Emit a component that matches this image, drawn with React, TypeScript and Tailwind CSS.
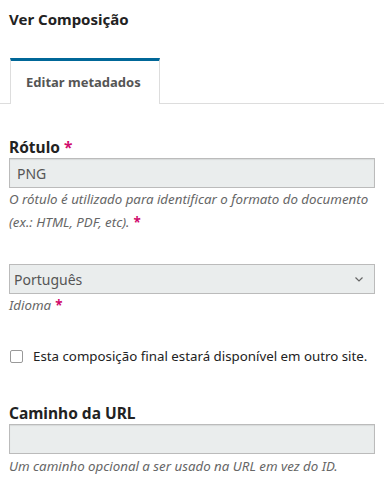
import React from 'react';

const font = { fontFamily: '"Noto Sans", "Open Sans", sans-serif' };

function Req() {
  return <span className="ml-[4px] text-[#d00a6c] font-bold not-italic">*</span>;
}

export default function App() {
  return (
    <div className="w-[384px] h-[500px] bg-white text-[#222] overflow-hidden" style={font}>
      <h1 className="px-[9px] pt-[8px] text-[15px] leading-[22px] font-bold">Ver Composição</h1>

      {/* abas */}
      <div className="mt-[28px] flex border-b border-[#ddd]">
        <div className="w-[10px]" />
        <div className="relative -mb-px w-[150px] h-[46px] border-x border-[#ddd] border-t-[3px] border-t-[#006798] bg-white flex items-center pl-[15px]">
          <span className="text-[13px] font-bold text-[#555]">Editar metadados</span>
        </div>
      </div>

      <div className="px-[9px] pt-[33px]">
        <label className="block text-[15.5px] leading-[20px] font-bold">
          Rótulo
          <Req />
        </label>
        <div className="mt-[1px] h-[30px] border border-[#bbb] bg-[#eaeded] flex items-center px-[7px] text-[14px] text-[#555] shadow-[inset_0_1px_1px_rgba(0,0,0,0.08)]">
          PNG
        </div>
        <p className="text-[13.3px] leading-[23px] italic text-[#666]">
          O rótulo é utilizado para identificar o formato do documento (ex.: HTML, PDF, etc).
          <Req />
        </p>

        <div className="mt-[30px] h-[30px] border border-[#bbb] bg-[#eaeded] flex items-center justify-between px-[4px] text-[14px] text-[#555]">
          <span>Português</span>
          <svg width="12" height="12" viewBox="0 0 12 12" className="mr-[5px]">
            <path d="M2.5 4.5 L6 8 L9.5 4.5" fill="none" stroke="#666" strokeWidth="1.2" />
          </svg>
        </div>
        <p className="text-[13.3px] leading-[22px] italic text-[#666]">
          Idioma
          <Req />
        </p>

        <label className="mt-[30px] flex items-center gap-[10px] text-[13.3px] leading-[20px] text-[#222] whitespace-nowrap">
          <span className="ml-px w-[13px] h-[13px] border border-[#999] rounded-[2px] bg-white shrink-0" />
          Esta composição final estará disponível em outro site.
        </label>

        <label className="mt-[37px] block text-[15.5px] leading-[20px] font-bold">Caminho da URL</label>
        <div className="mt-[1px] h-[30px] border border-[#bbb] bg-[#eaeded] shadow-[inset_0_1px_1px_rgba(0,0,0,0.08)]" />
        <p className="mt-[1px] text-[13.3px] leading-[23px] italic text-[#666]">
          Um caminho opcional a ser usado na URL em vez do ID.
        </p>
      </div>
    </div>
  );
}
